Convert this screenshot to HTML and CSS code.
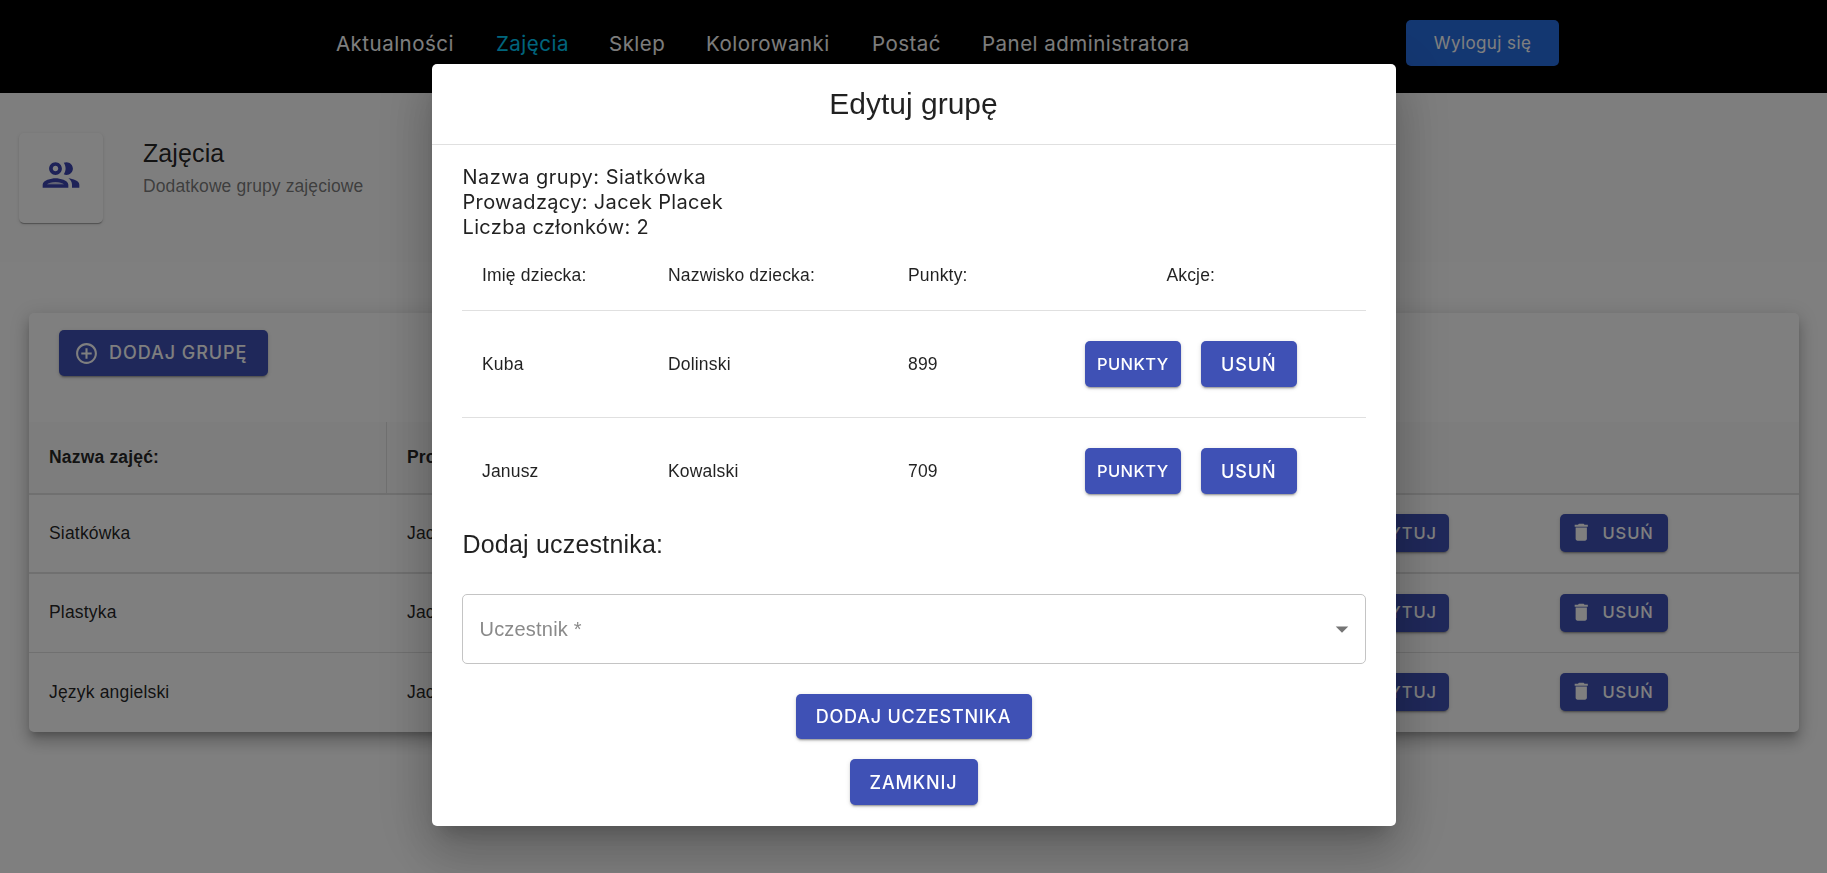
FILE: index.html
```html
<!DOCTYPE html>
<html lang="pl">
<head>
<meta charset="utf-8">
<title>Zajęcia</title>
<link rel="stylesheet" href="styles.css">
</head>
<body>
<svg class="sprite" width="0" height="0">
  <symbol id="trash" viewBox="0 0 24 24"><path d="M6 19c0 1.100.9 2 2 2h8c1.100 0 2-.9 2-2V7H6v12zM19 4h-3.500l-1-1h-5l-1 1H5v2h14V4z"/></symbol>
</svg>
<header class="topbar">
  <nav class="nav">
    <a>Aktualności</a><a class="active">Zajęcia</a><a>Sklep</a><a>Kolorowanki</a><a>Postać</a><a>Panel administratora</a>
  </nav>
  <button class="logout">Wyloguj się</button>
</header>
<section class="banner">
  <div class="banner-icon">
    <svg viewBox="0 0 24 24"><path d="M9 13.750c-2.340 0-7 1.170-7 3.500V19h14v-1.750c0-2.330-4.660-3.500-7-3.500zM4.340 17c.84-.58 2.870-1.250 4.660-1.250s3.820.67 4.660 1.250H4.340zM9 12c1.930 0 3.500-1.570 3.500-3.500S10.930 5 9 5 5.500 6.570 5.500 8.500 7.070 12 9 12zm0-5c.83 0 1.500.67 1.500 1.500S9.830 10 9 10s-1.500-.67-1.500-1.500S8.170 7 9 7zm7.040 6.810c1.160.84 1.960 1.960 1.960 3.440V19h4v-1.750c0-2.020-3.500-3.170-5.960-3.440zM15 12c1.930 0 3.500-1.570 3.500-3.500S16.930 5 15 5c-.54 0-1.040.13-1.500.35.63.89 1 1.980 1 3.150s-.37 2.260-1 3.150c.46.22.96.35 1.500.35z"/><path opacity=".3" d="M4.340 17h9.320c-.84-.58-2.870-1.250-4.660-1.250S5.180 16.420 4.340 17z"/></svg>
  </div>
  <div class="banner-text">
    <h1>Zajęcia</h1>
    <p>Dodatkowe grupy zajęciowe</p>
  </div>
</section>
<main class="card">
  <div class="toolbar">
    <button class="btn add"><svg viewBox="0 0 24 24"><path d="M13 7h-2v4H7v2h4v4h2v-4h4v-2h-4V7zm-1-5C6.480 2 2 6.480 2 12s4.480 10 10 10 10-4.480 10-10S17.520 2 12 2zm0 18c-4.410 0-8-3.590-8-8s3.590-8 8-8 8 3.590 8 8-3.590 8-8 8z"/></svg><span>DODAJ GRUPĘ</span></button>
  </div>
  <div class="row head"><div class="name">Nazwa zajęć:</div><div class="lead">Prowadzący:</div></div>
  <div class="row"><div class="name">Siatkówka</div><div class="lead">Jacek Placek</div><div class="cell"><button class="btn small edit">EDYTUJ</button></div><div class="cell"><button class="btn small del"><svg><use href="#trash"/></svg><span>USUŃ</span></button></div></div>
  <div class="row thin"><div class="name">Plastyka</div><div class="lead">Jacek Placek</div><div class="cell"><button class="btn small edit">EDYTUJ</button></div><div class="cell"><button class="btn small del"><svg><use href="#trash"/></svg><span>USUŃ</span></button></div></div>
  <div class="row last"><div class="name">Język angielski</div><div class="lead">Jacek Placek</div><div class="cell"><button class="btn small edit">EDYTUJ</button></div><div class="cell"><button class="btn small del"><svg><use href="#trash"/></svg><span>USUŃ</span></button></div></div>
</main>
<div class="backdrop">
  <div class="dialog">
    <h2 class="dialog-title">Edytuj grupę</h2>
    <div class="dialog-body">
      <div class="info"><div class="wide">Nazwa grupy: Siatkówka</div><div>Prowadzący: Jacek Placek</div><div>Liczba członków: 2</div></div>
      <div class="kids">
        <div class="kid kid-head"><div>Imię dziecka:</div><div>Nazwisko dziecka:</div><div>Punkty:</div><div class="actions">Akcje:</div></div>
        <div class="kid"><div>Kuba</div><div>Dolinski</div><div>899</div><div class="actions"><button class="btn points">PUNKTY</button><button class="btn remove">USUŃ</button></div></div>
        <div class="kid kid-last"><div>Janusz</div><div>Kowalski</div><div>709</div><div class="actions"><button class="btn points">PUNKTY</button><button class="btn remove">USUŃ</button></div></div>
      </div>
      <h3 class="subtitle">Dodaj uczestnika:</h3>
      <div class="select"><span>Uczestnik *</span><svg viewBox="0 0 24 24"><path d="M7 10l5 5 5-5z"/></svg></div>
      <div class="buttons">
        <button class="btn submit">DODAJ UCZESTNIKA</button>
        <button class="btn close">ZAMKNIJ</button>
      </div>
    </div>
  </div>
</div>
</body>
</html>
```
FILE: styles.css
```css
* { box-sizing: border-box; }
html { overflow: hidden; }
body { margin: 0; height: 873px; overflow: hidden; background: #fefefe; color: rgba(0,0,0,.87); font-family: "Liberation Sans", Arial, sans-serif; font-size: 17.5px; }
h1, h2, h3, p { margin: 0; font-weight: 400; }
button { border: 0; padding: 0; margin: 0; }
.sprite { display: block; width: 0; height: 0; }

.topbar { height: 93px; background: #000; display: flex; align-items: flex-start; padding-left: 336px; }
.nav { display: grid; grid-template-columns: 160px 113px 97px 166px 110px 424px; padding-top: 31px; line-height: 25px; font-family: Inter, sans-serif; font-size: 20.5px; letter-spacing: .48px; color: #fff; white-space: nowrap; }
.nav .active { color: #00d0ff; }
.logout { width: 153px; height: 46px; margin-top: 20px; border-radius: 5px; background: #276ee3; color: #fff; font: 17px Inter, sans-serif; letter-spacing: .4px; }

.banner { height: 169px; background: #fdfdfd; display: flex; padding: 40px 19px; gap: 40px; }
.banner-icon { width: 84px; height: 90px; padding: 20px; border-radius: 5px; background: #fff; box-shadow: 0 2px 1px -1px rgba(0,0,0,.2), 0 1px 1px rgba(0,0,0,.14), 0 1px 4px rgba(0,0,0,.12); }
.banner-icon svg { display: block; width: 44px; height: 44px; fill: #3c44b1; }
.banner-text h1 { font-size: 25px; line-height: 40px; letter-spacing: .1px; }
.banner-text p { font-size: 17.5px; line-height: 24px; letter-spacing: .1px; opacity: .6; padding-top: 1px; }

.btn { background: #3f51b5; color: #fff; border-radius: 5px; font-family: Inter, sans-serif; font-weight: 500; display: flex; align-items: center; justify-content: center; white-space: nowrap; box-shadow: 0 3px 1px -2px rgba(0,0,0,.2), 0 2px 2px rgba(0,0,0,.14), 0 1px 5px rgba(0,0,0,.12); }
.btn svg { fill: #fff; }

.card { margin: 51px 28px 0 29px; height: 419px; border-radius: 5px; background: #fff; overflow: visible; box-shadow: 0 6px 6px -3px rgba(0,0,0,.2), 0 10px 14px 1px rgba(0,0,0,.14), 0 4px 18px 3px rgba(0,0,0,.12); }
.toolbar { height: 109px; padding: 17px 30px; }
.add { width: 209px; height: 46px; justify-content: flex-start; padding-left: 15px; gap: 10px; font-size: 18px; letter-spacing: .95px; }
.add svg { width: 25px; height: 25px; }
.add span { padding-bottom: 2px; }
.row { display: grid; grid-template-columns: 358px 937px 207px 1fr; height: 79px; padding-bottom: 1px; border-bottom: 2px solid #e0e0e0; align-items: center; letter-spacing: .18px; }
.row.thin { border-bottom-width: 1px; }
.row.last { border-bottom: 0; }
.row.head { height: 73px; padding-bottom: 0; background: #fafafa; font-weight: 700; align-items: stretch; line-height: 70px; }
.name { padding-left: 20px; }
.lead { padding-left: 20px; }
.head .name { border-right: 1px solid #e0e0e0; }
.small { height: 38px; font-size: 16.5px; letter-spacing: .9px; padding-bottom: 1px; }
.edit { width: 125px; justify-content: flex-end; padding-right: 12px; }
.del { width: 108px; margin-left: 29px; justify-content: flex-start; padding-left: 10px; gap: 10px; }
.del svg { width: 22.5px; height: 22.5px; }

.backdrop { position: fixed; inset: 0; background: rgba(0,0,0,.5); display: flex; justify-content: center; align-items: flex-start; padding-top: 64px; }
.dialog { width: 964px; height: 762px; border-radius: 5px; background: #fff; box-shadow: 0 14px 19px -9px rgba(0,0,0,.2), 0 30px 48px 4px rgba(0,0,0,.14), 0 11px 58px 10px rgba(0,0,0,.12); }
.dialog-title { height: 81px; border-bottom: 1px solid #e0e0e0; text-align: center; font-size: 30px; line-height: 79px; }
.dialog-body { padding: 20px 30px; }
.info { padding-left: 1px; font: 20px/25px Inter, sans-serif; letter-spacing: .33px; }
.info .wide { letter-spacing: .5px; }
.kids { margin-top: 7px; }
.kid { display: grid; grid-template-columns: 186px 240px 127px 1fr; align-items: center; height: 107px; padding-left: 20.5px; border-bottom: 1px solid #e0e0e0; letter-spacing: .18px; }
.kid-head { height: 64px; line-height: 22px; align-items: start; padding-top: 17px; }
.kid-last { height: 106px; border-bottom: 0; }
.actions { display: flex; justify-content: center; gap: 20px; padding-right: 19px; }
.points, .remove { width: 96px; height: 46px; }
.points { font-size: 16.5px; letter-spacing: .4px; padding-bottom: 1px; }
.remove { font-size: 18px; letter-spacing: .9px; }
.subtitle { padding-left: 1px; font-size: 25px; line-height: 32px; letter-spacing: .2px; margin-top: 4px; }
.select { margin-top: 34px; height: 70px; border: 1px solid #c4c4c4; border-radius: 5px; padding: 0 8px 0 17px; display: flex; align-items: center; justify-content: space-between; font-size: 20px; letter-spacing: .2px; color: #8a8a8a; }
.select svg { width: 30px; height: 30px; fill: #757575; }
.buttons { margin-top: 30px; display: flex; flex-direction: column; align-items: center; gap: 20px; }
.submit { width: 236px; height: 45px; font-size: 18px; letter-spacing: .78px; padding-bottom: 1px; }
.close { width: 128px; height: 46px; font-size: 18px; letter-spacing: .85px; }
```
